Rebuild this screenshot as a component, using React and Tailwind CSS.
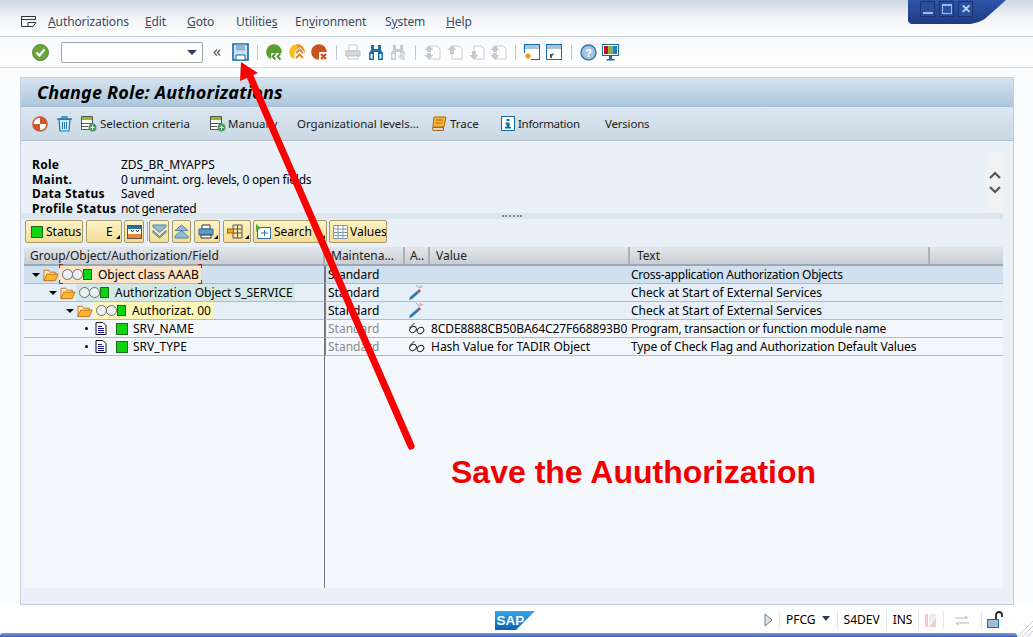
import React from 'react';

const font = "font-['Noto_Sans','Open_Sans',sans-serif]";

const Sep = ({ className = '' }) => <div className={`w-px h-[15px] bg-[#b9cbdb] ${className}`} />;

// Toolbar icons
const CheckIcon = () => (
  <svg width="17" height="17" viewBox="0 0 17 17" className="shrink-0">
    <circle cx="8.5" cy="8.5" r="8" fill="#6ba33a" stroke="#4f8a2a" />
    <path d="M4.500 8.500l3 3 5-6" fill="none" stroke="#fff" strokeWidth="2.2" />
  </svg>
);
const SaveIcon = () => (
  <svg width="17" height="18" viewBox="0 0 17 18" className="shrink-0">
    <path d="M1 1h15v16H1z" fill="#cfe0ef" stroke="#0d6da8" strokeWidth="1.6" />
    <path d="M4 1.500h9v6H4z" fill="#8fb4d4" />
    <path d="M4 12h9v5H4z" fill="#fff" stroke="#0d6da8" />
  </svg>
);
const BackIcon = () => (
  <svg width="17" height="17" viewBox="0 0 17 17" className="shrink-0">
    <circle cx="8" cy="8" r="7.800" fill="#5c9c2e" />
    <rect x="5" y="9" width="12" height="8" rx="1" fill="#fff" />
    <path d="M9.500 9.500l-3 3 3 3M14.500 9.500l-3 3 3 3" fill="none" stroke="#4f8f2f" strokeWidth="1.800" />
  </svg>
);
const UpIcon = () => (
  <svg width="17" height="17" viewBox="0 0 17 17" className="shrink-0">
    <circle cx="8" cy="8" r="7.800" fill="#fbbc1f" />
    <path d="M8 0.200a7.800 7.800 0 0 1 0 15.600z" fill="#f08a2a" />
    <path d="M10.500 3l5 5v9H5.500V8z" fill="#fff" />
    <path d="M7 9l3.500-3.500L14 9M7 14l3.500-3.500L14 14" fill="none" stroke="#e8801d" strokeWidth="1.800" />
  </svg>
);
const CancelIcon = () => (
  <svg width="17" height="17" viewBox="0 0 17 17" className="shrink-0">
    <circle cx="8" cy="8" r="7.800" fill="#c9521f" />
    <rect x="8" y="8" width="9" height="9" rx="1" fill="#fff" />
    <path d="M10 10l5 5M15 10l-5 5" stroke="#c9521f" strokeWidth="2.200" />
  </svg>
);
const PrintIcon = () => (
  <svg width="16" height="16" viewBox="0 0 16 16" className="shrink-0">
    <path d="M4 1h8v6H4z" fill="#fff" stroke="#c3c7cb" />
    <path d="M1 7h14v5H1z" fill="#d8dbde" stroke="#b9bdc1" />
    <path d="M3 12h10v3H3z" fill="#fff" stroke="#c3c7cb" />
  </svg>
);
const Binoculars = ({ color, plus }) => (
  <svg width="16" height="17" viewBox="0 0 16 17" className="shrink-0">
    <path d="M3 1h3v4h4V1h3v5l2 3v7H10V8H6v8H1V9l2-3z" fill={color} />
    <path d="M2.500 10h2v4.500h-2zM11.500 10h2v4.500h-2z" fill="#fff" />
    {plus && <path d="M10 9h3v2h2v3h-2v2h-3v-2H8v-3h2z" fill="#d5d8db" stroke="#fff" strokeWidth="0.500" />}
  </svg>
);
const PageIcon = ({ dir, dbl }) => (
  <svg width="17" height="17" viewBox="0 0 17 17" className="shrink-0">
    <path d="M6 2h7l3 3v10H6z" fill="#fff" stroke="#c8ccd0" />
    {dir === 'up' ? (
      <path d={dbl ? 'M5 1l4.500 5H7v2H3V6H0.500z' : 'M6 1l4.500 5H8v4H4V6H1.500z'} fill="#c6c9cd" />
    ) : (
      <path d={dbl ? 'M5 16l4.500-5H7V9H3v2H0.500z' : 'M6 16l4.500-5H8V7H4v4H1.500z'} fill="#c6c9cd" />
    )}
    {dbl && <path d={dir === 'up' ? 'M5 16l4.500-5H7V9H3v2H0.500z' : 'M5 1l4.500 5H7v2H3V6H0.500z'} fill="#c6c9cd" />}
  </svg>
);
const WindowIcon = ({ arrow }) => (
  <svg width="16" height="16" viewBox="0 0 16 16" className="shrink-0">
    <rect x="0.500" y="0.500" width="15" height="15" fill="#fff" stroke="#0d6da8" />
    <rect x="1" y="1" width="14" height="4" fill="#a9c3d9" />
    {arrow ? (
      <path d="M4 14v-4h2l2-1-1 3-1-1v3z" fill="#555" />
    ) : (
      <g>
        <rect x="0" y="9" width="7" height="7" fill="#fff" />
        <circle cx="4" cy="12" r="2.600" fill="#f59a12" />
      </g>
    )}
  </svg>
);
const HelpIcon = () => (
  <svg width="17" height="17" viewBox="0 0 17 17" className="shrink-0">
    <circle cx="8.500" cy="8.500" r="7.500" fill="#a5c3dd" stroke="#2a77ad" strokeWidth="1.400" />
    <text x="8.500" y="12.500" textAnchor="middle" fontSize="11" fontWeight="700" fill="#fff" fontFamily="Liberation Sans">?</text>
  </svg>
);
const MonitorIcon = () => (
  <svg width="17" height="17" viewBox="0 0 17 17" className="shrink-0">
    <rect x="0.500" y="0.500" width="16" height="11" fill="#fff" stroke="#0d6da8" />
    <rect x="2" y="2" width="4.400" height="8" fill="#c80f0f" />
    <rect x="6.400" y="2" width="4.200" height="8" fill="#8cb423" />
    <rect x="10.600" y="2" width="4.400" height="8" fill="#1f7fc0" />
    <path d="M7 12h3v3H7zM4.500 15h8v1.500h-8z" fill="#0d6da8" />
  </svg>
);

// Application toolbar icons
const RoundOrange = () => (
  <svg width="16" height="16" viewBox="0 0 16 16" className="shrink-0">
    <circle cx="8" cy="8" r="7" fill="#fff" stroke="#d2562b" strokeWidth="1.600" />
    <path d="M8 8V1a7 7 0 0 1 7 7zM8 8v7a7 7 0 0 1-7-7z" fill="#d2562b" />
  </svg>
);
const Trash = () => (
  <svg width="17" height="17" viewBox="0 0 17 17" className="shrink-0">
    <path d="M1 4h15M6 4V2h5v2" fill="none" stroke="#1b7bb5" strokeWidth="1.300" />
    <path d="M3 4.500h11l-1 11.500H4z" fill="#d8e8f3" stroke="#1b7bb5" strokeWidth="1.200" />
    <path d="M6.500 7v7M8.500 7v7M10.500 7v7" stroke="#1b7bb5" />
  </svg>
);
const ListAdd = () => (
  <svg width="16" height="16" viewBox="0 0 16 16" className="shrink-0">
    <path d="M0.500 0.500h11v13h-11z" fill="#fff" stroke="#555" />
    <path d="M1 1h10v3H1z" fill="#8dbb2a" />
    <path d="M1 7.500h10M1 10.500h6" stroke="#555" />
    <circle cx="11.500" cy="11.500" r="4" fill="#4f9a5d" />
    <path d="M9.500 11.500h4M11.500 9.500v4" stroke="#fff" />
  </svg>
);
const Scroll = () => (
  <svg width="15" height="15" viewBox="0 0 15 15" className="shrink-0">
    <path d="M2 1h12l-2 10H1z" fill="#f6b73c" stroke="#b4620c" />
    <path d="M0.500 11.500h11v3H1zM4 4h7M3.500 7h7" fill="none" stroke="#b4620c" />
  </svg>
);
const InfoIcon = () => (
  <svg width="14" height="15" viewBox="0 0 14 15" className="shrink-0">
    <rect x="0.500" y="0.500" width="13" height="14" fill="#fff" stroke="#0d6da8" />
    <path d="M5.500 3h3v2h-3zM4.500 6.500h4V11h1.500v1.500H4V11h1.500V8H4.500z" fill="#0d6da8" />
  </svg>
);

// Table button
const TableBtn = ({ w, children, className = '' }) => (
  <div className={`h-[23px] shrink-0 flex items-center rounded-[2px] border border-[#a89a66] bg-gradient-to-b from-[#fdf3c8] to-[#f4dc94] text-[12px] text-black overflow-hidden ${w} ${className}`}>
    {children}
  </div>
);
const Led = ({ size = 'w-[12px] h-[12px]' }) => <div className={`${size} shrink-0 bg-[#0fd40f] border border-[#1c6b1c]`} />;
const Caret = () => <div className="ml-auto mr-[1px] mt-[10px] w-0 h-0 border-l-[4px] border-l-transparent border-b-[4px] border-b-black" />;
const Chevrons = ({ up }) => (
  <svg width="15" height="15" viewBox="0 0 16 16" className="shrink-0 mx-auto">
    <path d={up ? 'M8 1l7 6H1zM8 7l7 6v2H1v-2z' : 'M1 1h14v2L8 9 1 3zM1 7l7 6 7-6v2l-7 6-7-6z'} fill="#8fbcdc" stroke="#2d6f9e" strokeWidth="0.800" />
  </svg>
);

// Tree parts
const Folder = () => (
  <svg width="16" height="14" viewBox="0 0 17 14" className="shrink-0">
    <path d="M1 13V2h5l1 2h6v2" fill="#fff2cf" stroke="#c86f10" />
    <path d="M1 13l3-7h12l-3 7z" fill="#f9b62f" stroke="#c86f10" />
  </svg>
);
const Tri = () => <div className="w-0 h-0 shrink-0 border-l-[4px] border-r-[4px] border-t-[4px] border-l-transparent border-r-transparent border-t-black" />;
const Lights = () => (
  <div className="flex items-center shrink-0">
    <div className="w-[11px] h-[11px] rounded-full bg-[#eef1f4] border border-[#6d6d6d]" />
    <div className="w-[11px] h-[11px] rounded-full bg-[#eef1f4] border border-[#6d6d6d] -ml-px" />
    <Led size="w-[9px] h-[11px]" />
  </div>
);
const DocIcon = () => (
  <svg width="12" height="13" viewBox="0 0 12 13" className="shrink-0">
    <path d="M1 0.500h7l3 3v9H1z" fill="#fff" stroke="#111" />
    <path d="M3 4.500h4M3 6.500h6M3 8.500h6M3 10.500h6" stroke="#14148c" />
  </svg>
);
const Pen = () => (
  <svg width="16" height="18" viewBox="0 0 16 18">
    <path d="M8 1l3 3M12 1l0 3M15 2l-3 2" stroke="#9a9a9a" strokeWidth="0.800" />
    <path d="M1 16l1-3 7-6 2 2-7 6z" fill="#2a7bb5" />
    <path d="M9 7l2-2 2 2-2 2z" fill="#b04a3a" />
  </svg>
);
const Glasses = () => (
  <svg width="17" height="13" viewBox="0 0 17 13">
    <ellipse cx="5" cy="7.500" rx="3.500" ry="2.800" fill="#fff" stroke="#222" transform="rotate(-35 5 7.500)" />
    <ellipse cx="12.500" cy="8.500" rx="3.500" ry="2.800" fill="#fff" stroke="#222" transform="rotate(-35 12.500 8.500)" />
    <path d="M1.500 6l5-5" stroke="#222" />
  </svg>
);

const Cell = ({ className = '', children }) => (
  <div className={`h-full flex items-center overflow-hidden whitespace-nowrap ${className}`}>{children}</div>
);

const rows = [
  {
    bg: 'bg-[#d1e0ee]', pl: 'pl-[8px]', tree: true, mark: 'bg-[#fbe3c6]', label: 'Object class AAAB',
    maint: 'Standard', text: 'Cross-application Authorization Objects', tight: 'tracking-[-0.28px]',
  },
  {
    bg: 'bg-[#e6eef7]', pl: 'pl-[25px]', tree: true, mark: 'bg-[#d3e8e4]', label: 'Authorization Object S_SERVICE',
    maint: 'Standard', icon: 'pen', text: 'Check at Start of External Services',
  },
  {
    bg: 'bg-[#e6eef7]', pl: 'pl-[42px]', tree: true, mark: 'bg-[#fdf7b8]', label: 'Authorizat. 00',
    maint: 'Standard', icon: 'pen', text: 'Check at Start of External Services',
  },
  {
    bg: 'bg-[#f4f8fc]', label: 'SRV_NAME', maint: 'Standard', gray: true, icon: 'glasses',
    value: '8CDE8888CB50BA64C27F668893B0', text: 'Program, transaction or function module name', tight: 'tracking-[-0.25px]',
  },
  {
    bg: 'bg-[#f4f8fc]', label: 'SRV_TYPE', maint: 'Standard', gray: true, icon: 'glasses',
    value: 'Hash Value for TADIR Object', text: 'Type of Check Flag and Authorization Default Values', tight: 'tracking-[-0.16px]',
  },
];

const cols = 'grid grid-cols-[301px_80px_25px_200px_300px_1fr]';

export default function App() {
  return (
    <div className={`relative w-[1033px] h-[637px] overflow-hidden bg-[#fbfcfe] text-[12px] text-black ${font}`}>
      {/* Window buttons */}
      <div className="absolute top-0 left-[908px] w-[98px] h-[24px] bg-gradient-to-b from-[#2f55a6] to-[#1d3b84] [clip-path:polygon(0_0,100%_0,78%_80%,72%_92%,64%_100%,3%_100%,0_90%)] flex gap-[4px] pl-[12px] pt-[1px] z-10">
        <div className="w-[15px] h-[16px] bg-[#2d4f9b] border border-[#1a3576] flex items-end justify-center pb-[2px]"><div className="w-[10px] h-[2px] bg-[#9fb9ef]" /></div>
        <div className="w-[15px] h-[16px] bg-[#2d4f9b] border border-[#1a3576] flex items-center justify-center"><div className="w-[10px] h-[10px] border border-[#9fb9ef] border-t-[2px]" /></div>
        <div className="w-[15px] h-[16px] bg-[#2d4f9b] border border-[#1a3576] flex items-center justify-center text-[#c4d4f6] font-bold text-[12px] leading-none">✕</div>
      </div>

      {/* Menu bar */}
      <div className="h-[37px] border-b border-[#c3ccd9] bg-gradient-to-b from-[#cfd8e6] via-[#f1f4f8] to-white flex items-center pt-[7px]">
        <svg width="16" height="12" viewBox="0 0 16 12" className="ml-[21px] shrink-0">
          <path d="M0.500 0.500h14v3h-14zM0.500 0.500v10h7M7 6.500h8l-3 4H7z" fill="none" stroke="#333" />
        </svg>
        <div className="flex ml-[11px] text-[12px] text-[#3c4a60] tracking-[-0.1px]">
          <span className="w-[97px]"><u>A</u>uthorizations</span>
          <span className="w-[42px]"><u>E</u>dit</span>
          <span className="w-[49px]"><u>G</u>oto</span>
          <span className="w-[59px]">Utilitie<u>s</u></span>
          <span className="w-[90px]">En<u>v</u>ironment</span>
          <span className="w-[61px]">S<u>y</u>stem</span>
          <span><u>H</u>elp</span>
        </div>
      </div>

      {/* System toolbar */}
      <div className="h-[31px] border-b border-[#d5dbe4] bg-gradient-to-b from-[#f7f9fc] to-white flex items-center">
        <div className="ml-[32px]"><CheckIcon /></div>
        <div className="ml-[12px] w-[142px] h-[21px] rounded-[2px] border border-[#a5a5a5] bg-white flex items-center justify-end pr-[5px]">
          <div className="w-0 h-0 border-l-[5px] border-r-[5px] border-t-[5px] border-l-transparent border-r-transparent border-t-[#2e3d5c]" />
        </div>
        <span className="ml-[10px] w-[15px] text-[16px] leading-none text-[#555] -mt-[2px]">«</span>
        <div className="ml-[4px]"><SaveIcon /></div>
        <Sep className="ml-[8px]" />
        <div className="ml-[8px]"><BackIcon /></div>
        <div className="ml-[6px]"><UpIcon /></div>
        <div className="ml-[5px]"><CancelIcon /></div>
        <Sep className="ml-[8px]" />
        <div className="ml-[8px]"><PrintIcon /></div>
        <div className="ml-[7px]"><Binoculars color="#1b6ea8" /></div>
        <div className="ml-[6px]"><Binoculars color="#c6c9cd" plus /></div>
        <Sep className="ml-[9px]" />
        <div className="ml-[8px]"><PageIcon dir="up" dbl /></div>
        <div className="ml-[5px]"><PageIcon dir="up" /></div>
        <div className="ml-[5px]"><PageIcon dir="down" /></div>
        <div className="ml-[5px]"><PageIcon dir="down" dbl /></div>
        <Sep className="ml-[8px]" />
        <div className="ml-[8px]"><WindowIcon /></div>
        <div className="ml-[6px]"><WindowIcon arrow /></div>
        <Sep className="ml-[9px]" />
        <div className="ml-[8px]"><HelpIcon /></div>
        <div className="ml-[5px]"><MonitorIcon /></div>
      </div>

      {/* Main panel */}
      <div className="mt-[9px] ml-[20px] w-[994px] h-[528px] border border-[#c3cfdf] bg-[#e9f0f7] flex flex-col">
        <div className="h-[29px] shrink-0 border-b border-[#a9bfd4] bg-gradient-to-b from-[#d5e3ef] to-[#adc7dc] flex items-center pl-[16px]">
          <span className="text-[18px] font-bold italic tracking-[0.15px]">Change Role: Authorizations</span>
        </div>
        <div className="h-[34px] shrink-0 border-b border-[#b5c0cb] bg-gradient-to-b from-[#dbe6ef] to-[#c9d8e5] flex items-center text-[#1c1c1c] text-[11.5px]">
          <div className="ml-[11px]"><RoundOrange /></div>
          <div className="ml-[8px]"><Trash /></div>
          <div className="ml-[8px]"><ListAdd /></div>
          <span className="ml-[3px] w-[110px]">Selection criteria</span>
          <ListAdd />
          <span className="ml-[2px] w-[69px]">Manually</span>
          <span className="w-[135px]">Organizational levels...</span>
          <Scroll />
          <span className="ml-[3px] w-[51px]">Trace</span>
          <InfoIcon />
          <span className="ml-[3px] w-[87px] tracking-[-0.3px]">Information</span>
          <span className="tracking-[-0.2px]">Versions</span>
        </div>

        {/* Role header */}
        <div className="h-[72px] shrink-0 flex relative">
          <div className="mt-[17px] ml-[11px] grid grid-cols-[89px_1fr] auto-rows-[14.500px] leading-[14px]">
            <b className="tracking-[0.3px]">Role</b><span>ZDS_BR_MYAPPS</span>
            <b className="tracking-[0.3px]">Maint.</b><span className="tracking-[-0.25px]">0 unmaint. org. levels, 0 open fields</span>
            <b className="tracking-[0.3px]">Data Status</b><span>Saved</span>
            <b className="tracking-[0.3px]">Profile Status</b><span className="tracking-[-0.4px]">not generated</span>
          </div>
          <div className="absolute right-[10px] top-[10px] w-[17px] h-[62px] bg-[#f0f1f2] flex flex-col items-center justify-center gap-[7px]">
            <svg width="12" height="8" viewBox="0 0 12 8"><path d="M1 7l5-5 5 5" fill="none" stroke="#555" strokeWidth="2.200" /></svg>
            <svg width="12" height="8" viewBox="0 0 12 8"><path d="M1 1l5 5 5-5" fill="none" stroke="#555" strokeWidth="2.200" /></svg>
          </div>
        </div>

        {/* Splitter */}
        <div className="h-[6px] shrink-0 mr-[10px] bg-[#dce6ee] flex items-center justify-center">
          <div className="w-[20px] h-[2px] border-t-2 border-dotted border-[#7b8a99]" />
        </div>

        {/* Grid toolbar */}
        <div className="h-[25px] shrink-0 flex items-center pl-[4px]">
          <TableBtn w="w-[58px]" className="pl-[5px] gap-[3px]"><Led />Status</TableBtn>
          <TableBtn w="w-[36px]" className="ml-[3px] pl-[19px]">E<Caret /></TableBtn>
          <TableBtn w="w-[20px]" className="ml-[2px] justify-center">
            <svg width="15" height="14" viewBox="0 0 15 14" className="shrink-0"><rect x="0.500" y="0.500" width="14" height="13" fill="#fff" stroke="#555" /><path d="M1 1h13v3H1z" fill="#2d6f9e" /><path d="M1 9h13v4H1z" fill="#ea8a2c" /><path d="M4 5l1.500 2L7 5M9 5l1.500 2L12 5" stroke="#333" fill="none" /></svg>
          </TableBtn>
          <div className="w-px h-[19px] bg-[#9aa7b3] ml-[3px]" />
          <TableBtn w="w-[20px]" className="ml-[1px]"><Chevrons /></TableBtn>
          <TableBtn w="w-[19px]" className="ml-[3px]"><Chevrons up /></TableBtn>
          <TableBtn w="w-[26px]" className="ml-[3px] pl-[3px]">
            <svg width="16" height="15" viewBox="0 0 16 15" className="shrink-0"><path d="M4 1h8v4H4z" fill="#fff" stroke="#333" /><path d="M1 5h14v6H1z" fill="#5b9bc7" stroke="#2d6f9e" /><path d="M3 11h10v3H3z" fill="#fff" stroke="#333" /></svg>
            <Caret />
          </TableBtn>
          <TableBtn w="w-[28px]" className="ml-[3px] pl-[3px]">
            <svg width="16" height="15" viewBox="0 0 16 15" className="shrink-0"><path d="M6 1h9v13H6zM6 5h9M6 9h9M10.500 1v13" fill="none" stroke="#555" /><rect x="0.500" y="5" width="6" height="4" fill="#f5a81c" stroke="#a5610f" /></svg>
            <Caret />
          </TableBtn>
          <TableBtn w="w-[74px]" className="ml-[2px] pl-[1px] gap-[2px]">
            <svg width="17" height="16" viewBox="0 0 17 16" className="shrink-0"><rect x="2.500" y="3.500" width="13" height="11" fill="#fff" stroke="#2d6f9e" /><path d="M1 0l5 4-5 4z" fill="#5caa3c" /><path d="M6 9h7M9.500 6v6" stroke="#2d6f9e" /></svg>
            Search<Caret />
          </TableBtn>
          <TableBtn w="w-[58px]" className="ml-[2px] pl-[3px] gap-[2px]">
            <svg width="15" height="14" viewBox="0 0 15 14" className="shrink-0"><path d="M0.500 0.500h14v13h-14zM0.500 4h14M0.500 7.500h14M0.500 10.500h14M5 0.500v13M10 0.500v13" fill="#fff" stroke="#7f97ad" /></svg>
            Values
          </TableBtn>
        </div>

        {/* Tree table */}
        <div className="mt-[3px] ml-[3px] mr-[10px] h-[341px] shrink-0 bg-[#f4f8fc] flex flex-col relative">
          <div className={`${cols} h-[19px] shrink-0 bg-gradient-to-b from-[#e3e6e9] to-[#c9ced3] border-b-2 border-[#9ba9b6] text-[#202020]`}>
            <Cell className="pl-[6px] border-r-2 border-[#a9b1b9]">Group/Object/Authorization/Field</Cell>
            <Cell className="pl-[6px] border-r-2 border-[#a9b1b9]">Maintena...</Cell>
            <Cell className="pl-[5px] border-r-2 border-[#a9b1b9]">A..</Cell>
            <Cell className="pl-[6px] border-r-2 border-[#a9b1b9]">Value</Cell>
            <Cell className="pl-[7px] border-r-2 border-[#a9b1b9]">Text</Cell>
            <Cell />
          </div>
          {rows.map((r) => (
            <div key={r.label} className={`${cols} h-[18px] shrink-0 border-b border-[#a8bcd2] ${r.bg}`}>
              <Cell className={r.tree ? r.pl : 'pl-[61px]'}>
                {r.tree ? (
                  <>
                    <Tri />
                    <div className="ml-[3px]"><Folder /></div>
                    <div className={`flex items-center h-full gap-[6px] pl-[3px] pr-[2px] ${r.mark}`}>
                      <Lights />
                      {r.label}
                    </div>
                  </>
                ) : (
                  <>
                    <div className="w-[3px] h-[3px] rounded-full bg-black" />
                    <div className="ml-[7px]"><DocIcon /></div>
                    <div className="ml-[9px]"><Led size="w-[12px] h-[12px]" /></div>
                    <span className="ml-[5px]">{r.label}</span>
                  </>
                )}
              </Cell>
              <Cell className={`pl-[2px] border-l border-[#70797f] ${r.gray ? 'text-[#8a8a8a]' : ''}`}>{r.maint}</Cell>
              <Cell className="pl-[3px]">
                {r.icon === 'pen' && <Pen />}
                {r.icon === 'glasses' && <Glasses />}
              </Cell>
              <Cell className={`pl-[1px] ${r.value === '8CDE8888CB50BA64C27F668893B0' ? 'tracking-[-0.1px]' : ''}`}>{r.value}</Cell>
              <Cell className={`pl-[1px] ${r.tight || ''}`}>{r.text}</Cell>
              <Cell />
            </div>
          ))}
          <div className="absolute left-[300px] top-[19px] bottom-0 w-px bg-[#70797f]" />
          {/* Focus brackets on the selected node */}
          <div className="absolute left-[35px] top-[17px] w-[4px] h-[4px] border-l border-t border-[#a01f1f]" />
          <div className="absolute left-[174px] top-[17px] w-[4px] h-[4px] border-r border-t border-[#a01f1f]" />
          <div className="absolute left-[35px] top-[33px] w-[4px] h-[4px] border-l border-b border-[#a01f1f]" />
          <div className="absolute left-[174px] top-[33px] w-[4px] h-[4px] border-r border-b border-[#a01f1f]" />
        </div>
      </div>

      {/* Status bar */}
      <div className="h-[28px] flex items-center bg-white relative pt-[2px]">
        <svg width="40" height="19" viewBox="0 0 40 19" className="ml-[495px] shrink-0">
          <defs>
            <linearGradient id="sapg" x1="0" y1="0" x2="0" y2="1">
              <stop offset="0" stopColor="#35a6e6" />
              <stop offset="1" stopColor="#0b62b0" />
            </linearGradient>
          </defs>
          <path d="M0 0h40L21 19H0z" fill="url(#sapg)" />
          <text x="1.500" y="14" fontSize="13.500" fontWeight="700" fill="#fff" fontFamily="Liberation Sans">SAP</text>
        </svg>
        <svg width="9" height="14" viewBox="0 0 9 14" className="ml-[229px] shrink-0"><path d="M1 1l7 6-7 6z" fill="#d8e2ec" stroke="#6a7f93" /></svg>
        <div className="w-px h-[18px] bg-[#e2e6ea] ml-[6px]" />
        <span className="ml-[6px]">PFCG</span>
        <div className="ml-[6px] mb-[4px] w-0 h-0 border-l-[4px] border-r-[4px] border-t-[5px] border-l-transparent border-r-transparent border-t-[#2e3d5c]" />
        <div className="w-px h-[18px] bg-[#e2e6ea] ml-[7px]" />
        <span className="ml-[6px]">S4DEV</span>
        <div className="w-px h-[18px] bg-[#e2e6ea] ml-[6px]" />
        <span className="ml-[6px]">INS</span>
        <div className="w-px h-[18px] bg-[#e2e6ea] ml-[6px]" />
        <svg width="11" height="13" viewBox="0 0 11 13" className="ml-[6px] shrink-0"><path d="M0 0h3v13H0zM4 13L11 3v10z" fill="#f2c9cf" /><path d="M4 0h7v2L4 11z" fill="#ececec" /></svg>
        <div className="w-px h-[18px] bg-[#e2e6ea] ml-[7px]" />
        <svg width="16" height="11" viewBox="0 0 16 11" className="ml-[10px] shrink-0"><path d="M1 3h13M11 1l3 2M15 8H2M5 10L2 8" stroke="#b5b9bd" fill="none" /></svg>
        <div className="w-px h-[18px] bg-[#e2e6ea] ml-[11px]" />
        <svg width="16" height="18" viewBox="0 0 16 18" className="ml-[5px] shrink-0"><path d="M9 8V4a3 3 0 0 1 6 0v2" fill="none" stroke="#222" strokeWidth="1.800" /><rect x="0.500" y="8.500" width="11" height="8" fill="#9fbdd6" stroke="#1b6ea8" /></svg>
      </div>
      <div className="h-[4px] bg-gradient-to-b from-[#7f9fdc] to-[#3a62b4] mr-[16px] rounded-t-[3px]" />
      {/* Resize grip */}
      <svg width="16" height="16" viewBox="0 0 16 16" className="absolute right-0 bottom-0">
        <path d="M0 16L16 0M5 16L16 5M10 16l6-6" stroke="#c5ccd4" />
      </svg>

      {/* Annotation over the screenshot */}
      <svg width="1033" height="637" viewBox="0 0 1033 637" className="absolute inset-0 pointer-events-none z-20">
        <path d="M411 446L249 74" stroke="#fa0000" strokeWidth="7" strokeLinecap="round" />
        <path d="M241 62L258 73 240 81z" fill="#fa0000" />
      </svg>
      <div className="absolute left-[451px] top-[452px] z-20 text-[32px] leading-[40px] font-bold text-[#f00000] font-['Liberation_Sans',sans-serif] whitespace-nowrap">
        Save the Auuthorization
      </div>
    </div>
  );
}
